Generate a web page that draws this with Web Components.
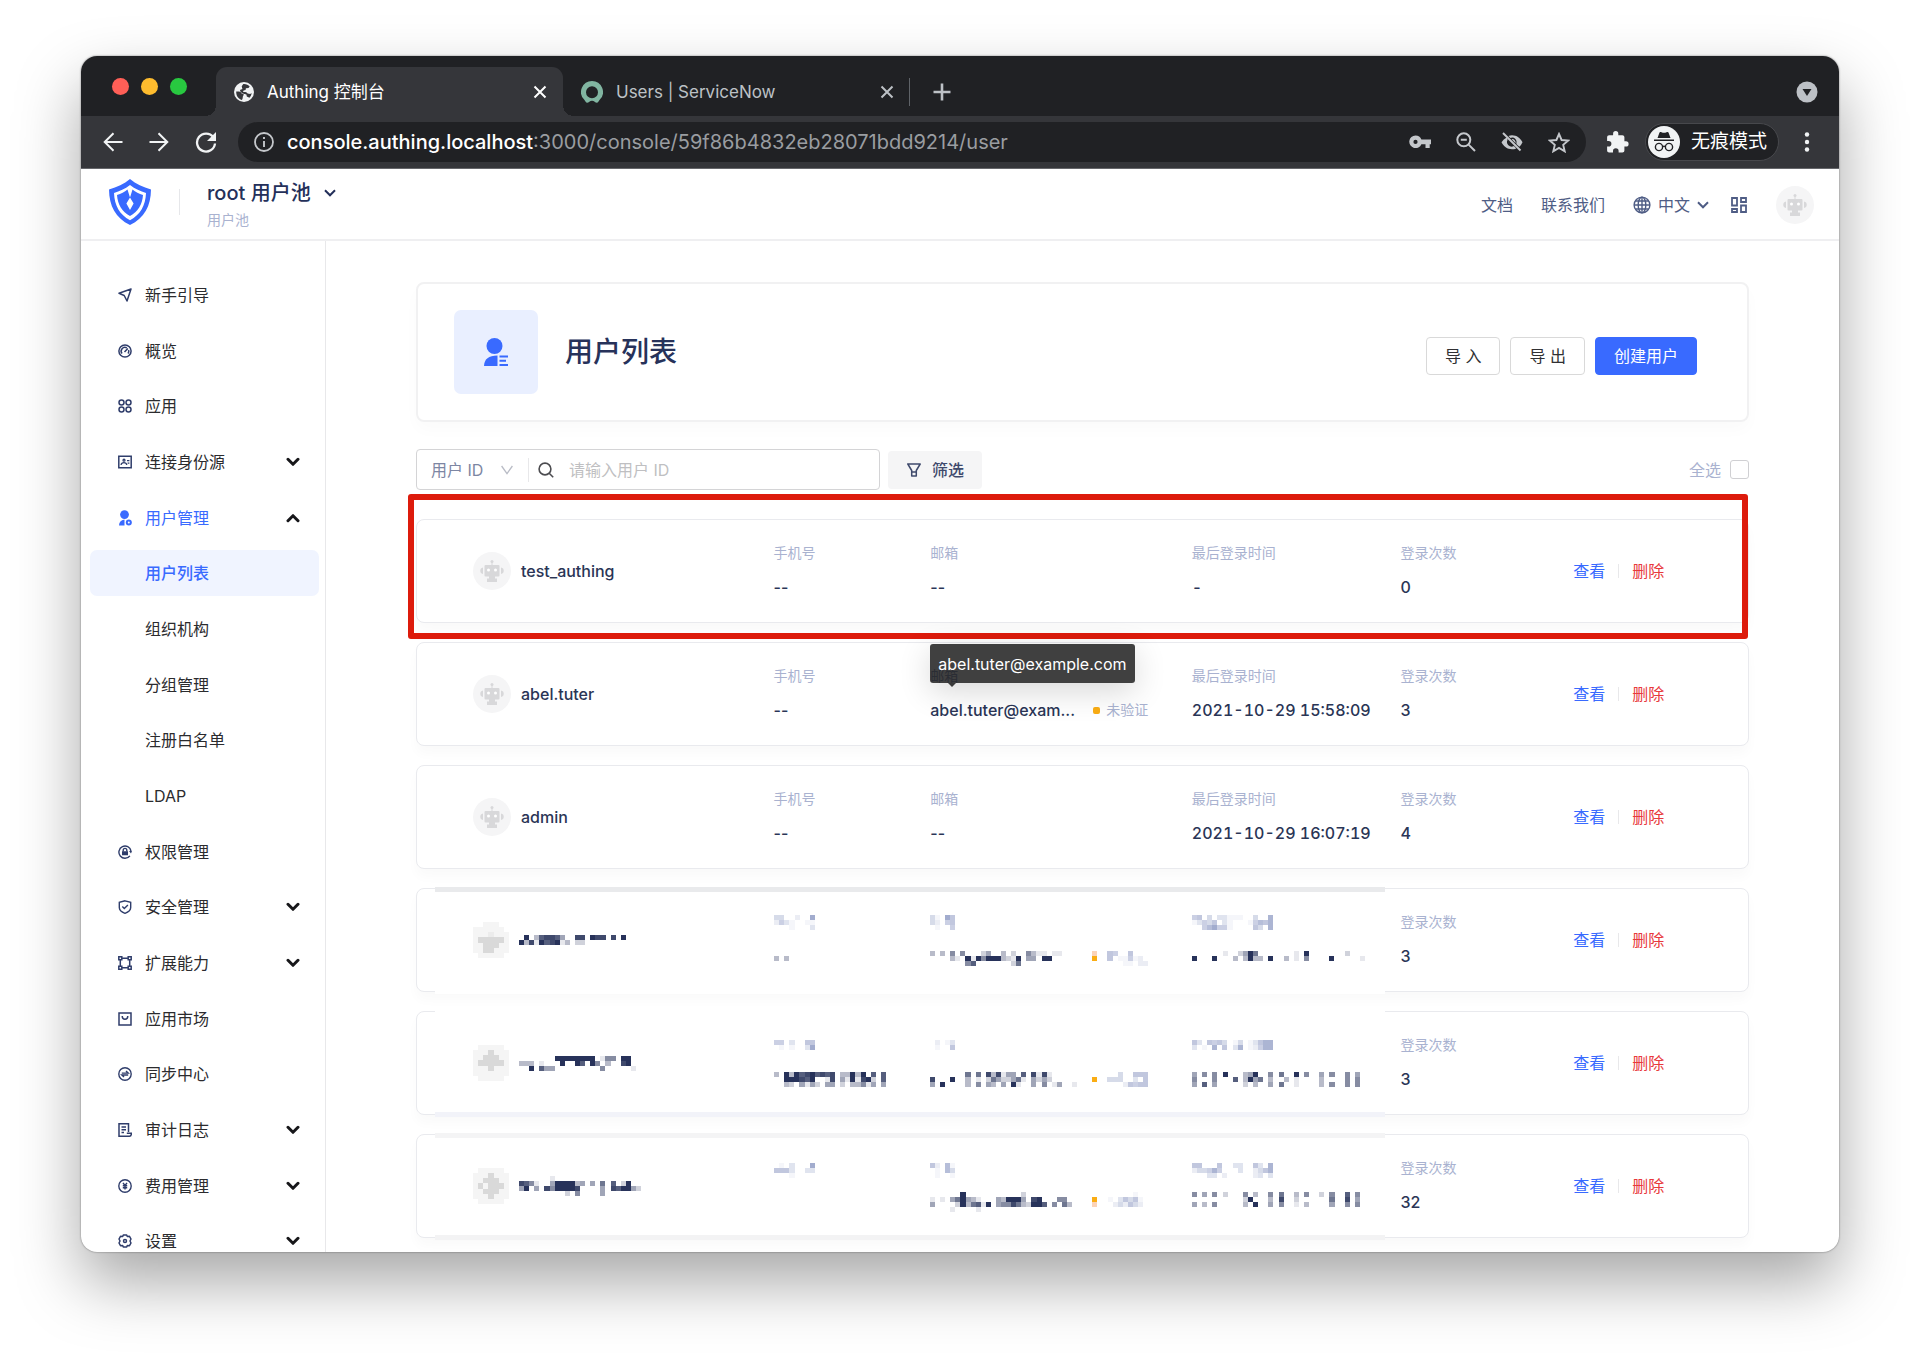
<!DOCTYPE html>
<html lang="zh-CN">
<head>
<meta charset="utf-8">
<title>Authing 控制台</title>
<style>
  html, body { margin: 0; height: 100%; }
  body {
    box-sizing: border-box;
    padding: 56px 81px 107px;
    background: #fff;
    overflow: hidden;
    font-family: Inter, "Noto Sans CJK SC", sans-serif;
    font-size: 16px;
    line-height: 24px;
    color: #2a3556;
    --blue: #396aff;
    --red: #e8393c;
    --soft: #a9b2d0;
  }
</style>
</head>
<body>
<browser-window>
  <tab-strip slot="tabs">
    <browser-tab active icon="globe-solid">Authing 控制台</browser-tab>
    <browser-tab icon="ring">Users | ServiceNow</browser-tab>
  </tab-strip>
  <tool-bar slot="toolbar" host="console.authing.localhost" path=":3000/console/59f86b4832eb28071bdd9214/user"></tool-bar>
  <app-header slot="header"></app-header>
  <side-nav slot="side">
    <nav-item icon="send">新手引导</nav-item>
    <nav-item icon="gauge">概览</nav-item>
    <nav-item icon="apps">应用</nav-item>
    <nav-item icon="idcard" caret="down">连接身份源</nav-item>
    <nav-item icon="usercog" caret="up" open>用户管理</nav-item>
    <nav-item current>用户列表</nav-item>
    <nav-item>组织机构</nav-item>
    <nav-item>分组管理</nav-item>
    <nav-item>注册白名单</nav-item>
    <nav-item>LDAP</nav-item>
    <nav-item icon="lock">权限管理</nav-item>
    <nav-item icon="shield" caret="down">安全管理</nav-item>
    <nav-item icon="nodes" caret="down">扩展能力</nav-item>
    <nav-item icon="bag">应用市场</nav-item>
    <nav-item icon="sync">同步中心</nav-item>
    <nav-item icon="log" caret="down">审计日志</nav-item>
    <nav-item icon="yen" caret="down">费用管理</nav-item>
    <nav-item icon="gear" caret="down">设置</nav-item>
  </side-nav>
  <page-title>用户列表</page-title>
  <list-filter></list-filter>
  <user-list></user-list>
</browser-window>

<script>
const define = (name, css, html) => customElements.define(name, class extends HTMLElement {
  connectedCallback() {
    if (this.shadowRoot) return;
    const root = this.attachShadow({ mode: 'open' });
    root.innerHTML = `<style>:host,*{box-sizing:border-box}button,input,select{font:inherit;color:inherit;margin:0}a{color:inherit;text-decoration:none}${css}</style>` +
      (typeof html === 'function' ? html(this) : html);
  }
});

/* Each icon: [viewBox width, viewBox height, markup] */
const L = 'fill="none" stroke="currentColor"';
const ICONS = {
  'globe-solid': [20, 20, `<circle cx="10" cy="10" r="10" fill="#f1f3f4"/><path fill="#35363a" d="M2.2 9.6c2.4-.2 4.600 .2 5 1.300.3 1 1.900.4 2.400 1.300.5 1-.8 1.500-.8 2.700 0 1.100-.4 2.400-1 3.100C4.500 17.200 2 14 2.200 9.600zM9.300 2c2.700-.3 5 1 6.400 2.500l-1.200 1.600-2.600.1-.3 1.800-2 .6-.6 1.500c1.900-.2 3.800.1 4.600 1.400l2.600.6 1.400-1.200c-.2 1.900-1 3.600-2.200 4.800l-2.600-1.300-.4-2-2.800-.6-2.800-1.600L5.900 8l2.500-1.100L7.700 4.300z"/>`],
  ring: [22, 22, `<path fill="#81b5a1" d="M11 0a11 11 0 0 0-7.700 18.800c1 1.100 1.600 2.900 2.900 3 1.500 0 2.600-2.100 4.800-2.100s3.300 2.100 4.800 2.100c1.300-.1 1.900-1.900 2.900-3A11 11 0 0 0 11 0zm0 17.300a6 6 0 1 1 0-12 6 6 0 0 1 0 12z"/>`],
  close: [14, 14, `<path ${L} stroke-width="2" d="M1.500 1.500l11 11M12.500 1.500l-11 11"/>`],
  plus: [18, 18, `<path ${L} stroke-width="2.600" d="M9 .5v17M.5 9h17"/>`],
  search_tabs: [22, 22, `<circle cx="11" cy="11" r="10.500" fill="#bdc1c6"/><path fill="#202124" d="M6.500 8h9L11 15z"/>`],
  back: [20, 20, `<path ${L} stroke-width="2" d="M19.500 10H2M10.500 1.200L1.700 10l8.800 8.800"/>`],
  forward: [20, 20, `<path ${L} stroke-width="2" d="M.5 10H18M9.500 1.200l8.800 8.800-8.800 8.800"/>`],
  reload: [22, 22, `<path ${L} stroke-width="2.300" d="M18.300 6.200A9 9 0 1 0 20 12.500"/><path fill="currentColor" d="M21 1v9h-9z"/>`],
  info: [20, 20, `<circle cx="10" cy="10" r="9" ${L} stroke-width="1.800"/><path ${L} stroke-width="1.900" d="M10 9v6M10 5v2"/>`],
  key: [22, 14, `<path fill="currentColor" fill-rule="evenodd" d="M6.500.5a6.300 6.300 0 1 0 5.900 8.700h4.100V13h4.200V9.200H22V4.600h-9.600A6.300 6.300 0 0 0 6.500.5zm0 4.300a2.100 2.100 0 1 1 0 4.200 2.100 2.100 0 0 1 0-4.200z"/>`],
  zoomout: [20, 20, `<circle cx="7.800" cy="7.800" r="6.500" ${L} stroke-width="2"/><path ${L} stroke-width="2" d="M12.600 12.600l6.400 6.400M4.800 7.800h6"/>`],
  eyeoff: [22, 20, `<path ${L} stroke-width="2" d="M2 1l17.500 17.500"/><path fill="currentColor" d="M5.700 5.600A13 13 0 0 0 .5 10.300c2 4.200 5.800 7 10.500 7 1.500 0 3-.3 4.300-.9l-2.400-2.400a4.600 4.600 0 0 1-6.300-6.200zM11 3.300c-1.200 0-2.400.2-3.500.6l2 2a4.600 4.600 0 0 1 5.900 6l2.900 2.900a12 12 0 0 0 3.200-4.500c-2-4.200-5.800-7-10.500-7zm-.4 3.900l4 4a3.400 3.400 0 0 0-4-4z"/>`],
  star: [22, 21, `<path ${L} stroke-width="1.900" d="M11 2l2.600 6 6.500.6-4.900 4.300 1.500 6.400L11 15.900l-5.700 3.400 1.500-6.400-4.900-4.300 6.500-.6z"/>`],
  puzzle: [22, 22, `<path fill="currentColor" d="M19 10.300h-1.600V6.200c0-1.100-.9-2-2-2h-4.100V2.700a2.600 2.600 0 0 0-5.200 0v1.500H2.100c-1.100 0-2 .9-2 2V10h1.500a2.800 2.800 0 0 1 0 5.600H.1v3.900c0 1.100.9 2 2 2H6V20a2.800 2.800 0 0 1 5.600 0v1.500h3.800c1.100 0 2-.9 2-2v-4H19a2.600 2.600 0 0 0 0-5.200z"/>`],
  incognito: [32, 32, `<circle cx="16" cy="16" r="16" fill="#f1f3f4"/><path fill="#202124" d="M9.500 12l2-5.500c.4-.8 1.200-.6 2-.3 1.600.7 3.400.7 5 0 .8-.3 1.600-.5 2 .3l2 5.500zM6 13.600h20v1.500H6z"/><g fill="none" stroke="#202124" stroke-width="1.400"><circle cx="11" cy="21" r="3.600"/><circle cx="21" cy="21" r="3.600"/><path d="M14.600 20.600c.9-.6 1.900-.6 2.800 0"/></g>`],
  dots: [6, 20, `<g fill="currentColor"><circle cx="3" cy="2.500" r="2.200"/><circle cx="3" cy="10" r="2.200"/><circle cx="3" cy="17.500" r="2.200"/></g>`],
  logo: [42, 46, `<path fill="#396aff" fill-rule="evenodd" d="M21 0c6 5 13 8 21 10.500-.2 16.500-6.500 28.500-21 35.500C6.500 39 .2 27 0 10.500 8 8 15 5 21 0zm0 6C16 10 10.500 12 5 14c.5 12.500 5.500 21.500 16 27.300C31.500 35.500 36.500 26.500 37 14 31.500 12 26 10 21 6z"/><path fill="#396aff" fill-rule="evenodd" d="M18.500 10.500C15.500 13 12 14.600 8 16c.7 9.500 5 16.500 13 21 8-4.500 12.300-11.500 13-21-4-1.400-7.500-3-10.500-5.500l-2 6.500c-.3 1.300-.7 1.300-1 0zM21 18.500l3.600 6-3.600 6.500-3.600-6.500z"/>`],
  chevron: [12, 8, `<path ${L} stroke-width="2" d="M1 1.300l5 5 5-5"/>`],
  boldchevron: [14, 10, `<path ${L} stroke-width="3" stroke-linecap="round" stroke-linejoin="round" d="M2 2.300l5 5 5-5"/>`],
  thinchevron: [12, 10, `<path ${L} stroke-width="1.300" d="M.6 1l5.400 7.600L11.400 1"/>`],
  globe: [18, 18, `<g ${L} stroke-width="1.400"><circle cx="9" cy="9" r="7.900"/><ellipse cx="9" cy="9" rx="3.800" ry="7.900"/><path d="M9 1v16M1 9h16M2.300 5h13.400M2.300 13h13.400"/></g>`],
  grid: [16, 16, `<g ${L} stroke-width="1.800"><path d="M1 1h5v7.500H1zM10 1h5v4H10zM1 12h5v3H1zM10 8.500h5V15H10z"/></g>`],
  robot: [38, 38, `<circle cx="19" cy="19" r="19" fill="#f5f5f6"/><g fill="#d8d8da"><circle cx="19" cy="9.500" r="1.500"/><path d="M18.500 10h1v3h-1zM12.500 13h13a1 1 0 0 1 1 1v9.500a1 1 0 0 1-1 1H22v2h2V30H14v-3.500h2v-2h-3.500a1 1 0 0 1-1-1V14a1 1 0 0 1 1-1zM10 15.500v6.500a3.300 3.300 0 0 1 0-6.500zM28 15.500v6.500a3.300 3.300 0 0 0 0-6.500z"/></g><circle cx="15.500" cy="18" r="1.500" fill="#fff"/><circle cx="22.500" cy="18" r="1.500" fill="#fff"/>`],
  send: [14, 14, `<path ${L} stroke-width="1.500" stroke-linejoin="round" d="M13 1L1 5.300l5.200 2.200L9 13z"/>`],
  gauge: [14, 14, `<g ${L} stroke-width="1.500"><circle cx="7" cy="7" r="6.100"/><path d="M4 9.500a3.800 3.800 0 0 1 4.800-5.700M10.600 6a3.600 3.600 0 0 1-.6 3.500M6.500 8l3.300-3.600"/></g>`],
  apps: [14, 14, `<g ${L} stroke-width="1.500"><circle cx="3.500" cy="3.500" r="2.500"/><circle cx="10.500" cy="3.500" r="2.500"/><circle cx="3.500" cy="10.500" r="2.500"/><circle cx="10.500" cy="10.500" r="2.500"/></g>`],
  idcard: [14, 14, `<g ${L} stroke-width="1.500"><path d="M.8 1.300h12.400v11.400H.8z"/><g stroke-width="1.200"><circle cx="6" cy="5.200" r="1"/><path d="M3 10c.6-3.200 5.200-3.200 5.800 0M9 5.600h2.400M9.600 8.200h1.800"/></g></g>`],
  usercog: [14, 16, `<g fill="currentColor"><circle cx="6.500" cy="4.600" r="4.400"/><path d="M1 15.500c.1-3.500 1.800-5.500 5.500-6v6z"/><circle cx="10.800" cy="12.500" r="3"/></g><circle cx="10.800" cy="12.500" r="1" fill="#fff"/>`],
  userlist: [24, 28, `<g fill="currentColor"><circle cx="10.500" cy="8" r="8"/><path d="M0 28c.3-7 4.500-10.500 13.500-10.500V28z"/><path d="M15.500 17.500H24v2h-8.500zM15.500 21.700H22v2h-6.500zM15.500 26H24v2h-8.500z"/></g>`],
  lock: [14, 14, `<g ${L} stroke-width="1.400"><path d="M11.900 10.800A6.100 6.100 0 1 1 13 6"/><path d="M5.200 6.500V5.200a1.800 1.800 0 0 1 3.600 0v1.300"/></g><path fill="currentColor" d="M4 6.300h6v4H4zM11 6h3l-1 2.500z"/>`],
  shield: [14, 14, `<g ${L} stroke-width="1.400"><path d="M7 .8l5.700 1.600v5.200c0 2.800-2.500 4.600-5.700 5.700C3.800 12.200 1.300 10.400 1.300 7.600V2.400z"/><path d="M4.300 6.600l2 2 3.600-3.500"/></g>`],
  nodes: [14, 14, `<g ${L} stroke-width="1.500"><path d="M4 2.300h6M4 11.700h6M2.300 4v6M11.700 4v6M.8.800h3v3h-3zM10.200.800h3v3h-3zM.8 10.200h3v3h-3zM10.200 10.200h3v3h-3z"/></g>`],
  bag: [14, 14, `<g ${L} stroke-width="1.500"><path d="M1 1h12v12H1zM4.300 4v.5a2.700 2.700 0 0 0 5.400 0V4"/></g>`],
  sync: [14, 14, `<g ${L} stroke-width="1.400"><circle cx="7" cy="7" r="6.200"/><path d="M3.800 6.100h6.400L8 4M10.200 8H3.800L6 10.100"/></g>`],
  log: [14, 14, `<g ${L} stroke-width="1.500"><path d="M10.500 9V.8H1v12.400h10.500c1.800 0 1.900-2.200 1.900-3H8.800M3.500 4h4.500M3.500 6.800h4.500M3.500 9.600h2.500"/></g>`],
  yen: [14, 14, `<g ${L} stroke-width="1.400"><circle cx="7" cy="7" r="6.200"/><path d="M5 3.800l2 2.700 2-2.700M7 6.500v4M4.800 6.800h4.400M4.800 8.700h4.400"/></g>`],
  gear: [14, 14, `<g ${L} stroke-width="1.500" stroke-linejoin="round"><path d="M5.300 1h3.400l.6 1.600 2.200-.3L13 5l-1 2 1 2-1.500 2.700-2.200-.3-.6 1.600H5.300l-.6-1.600-2.200.3L1 9l1-2-1-2 1.500-2.700 2.200.3z"/><circle cx="7" cy="7" r="1.500"/></g>`],
  search: [16, 16, `<g ${L} stroke-width="1.600"><circle cx="7" cy="7" r="5.900"/><path d="M11.200 11.200l4 4"/></g>`],
  funnel: [14, 14, `<g ${L} stroke-width="1.500" stroke-linejoin="round"><path d="M.8 1h12.400L9.300 7.500V13H4.700V7.500zM4.700 9h4.600"/></g>`]
};

customElements.define('ui-icon', class extends HTMLElement {
  connectedCallback() {
    if (this.shadowRoot) return;
    const [w, h, body] = ICONS[this.getAttribute('name')];
    this.attachShadow({ mode: 'open' }).innerHTML =
      `<style>:host{display:inline-flex;flex:none}svg{display:block}</style><svg width="${w}" height="${h}" viewBox="0 0 ${w} ${h}" aria-hidden="true">${body}</svg>`;
  }
});

/* Pixelated patch for masked values. Rows are separated by "/".
   1-9: dark shades, a-i: label blue shades, O/o: status orange, x-z: avatar greys. */
customElements.define('masked-value', class extends HTMLElement {
  connectedCallback() {
    if (this.shadowRoot) return;
    const rows = this.getAttribute('rows').split('/');
    const cols = Math.max(...rows.map(r => r.length));
    let cells = '';
    rows.forEach((row, y) => [...row].forEach((c, x) => {
      let fill, o = 1;
      if (c >= '1' && c <= '9') { fill = '#27325a'; o = c / 9; }
      else if (c >= 'a' && c <= 'i') { fill = '#a2acce'; o = (c.charCodeAt(0) - 96) / 9; }
      else if (c === 'O') fill = '#faad14';
      else if (c === 'o') fill = '#fbd3b8';
      else if (c === 'x') fill = '#f5f5f5';
      else if (c === 'y') fill = '#ececec';
      else if (c === 'z') fill = '#d9d9d9';
      else return;
      cells += `<rect x="${x}" y="${y}" width="1" height="1" fill="${fill}" opacity="${o.toFixed(2)}"/>`;
    }));
    this.attachShadow({ mode: 'open' }).innerHTML =
      `<style>:host{display:block;flex:none}svg{display:block}</style><svg width="${Math.round(cols * 5.08)}" height="${Math.round(rows.length * 5.08)}" viewBox="0 0 ${cols} ${rows.length}" preserveAspectRatio="none" shape-rendering="crispEdges" aria-hidden="true">${cells}</svg>`;
  }
});

define('browser-window', `
  :host{display:flex;flex-direction:column;height:100%;border-radius:16px;overflow:hidden;background:#fff;
    box-shadow:0 0 2px rgba(0,0,0,.5),0 30px 64px rgba(0,0,0,.35)}
  .body{flex:1;min-height:0;display:flex}
  main{flex:1;min-width:0;padding:41px 90px 0;overflow:hidden}
`, `<slot name="tabs"></slot><slot name="toolbar"></slot><slot name="header"></slot>
  <div class="body"><slot name="side"></slot><main><slot></slot></main></div>`);

define('tab-strip', `
  :host{display:flex;flex:none;height:60px;background:#202124;color:#bdc1c6;padding:0 21px 0 31px}
  .lights{display:flex;gap:12px;padding-top:22px;width:104px}
  .lights i{width:17px;height:17px;border-radius:50%;background:#ff5f57}
  .lights i:nth-child(2){background:#febc2e}.lights i:nth-child(3){background:#28c840}
  .tabs{display:flex;padding-top:11px}
  button{border:0;background:none;padding:0;display:flex;align-items:center;color:inherit}
  .new{margin-top:11px;margin-left:23px}
  .end{margin:11px 0 0 auto}
`, `<div class="lights"><i></i><i></i><i></i></div><div class="tabs"><slot></slot></div>
  <button class="new" aria-label="新标签页"><ui-icon name="plus"></ui-icon></button>
  <button class="end" aria-label="搜索标签页"><ui-icon name="search_tabs"></ui-icon></button>`);

define('browser-tab', `
  :host{display:flex;align-items:center;gap:13px;width:347px;height:49px;padding:0 16px 0 18px;font-size:17px;position:relative;border-radius:11px 11px 0 0}
  :host([active]){background:#35363a;color:#fff}
  :host([active])::before,:host([active])::after{content:"";position:absolute;bottom:0;width:11px;height:11px}
  :host([active])::before{left:-11px;background:radial-gradient(circle at 0 0,transparent 11px,#35363a 11px)}
  :host([active])::after{right:-11px;background:radial-gradient(circle at 100% 0,transparent 11px,#35363a 11px)}
  :host(:not([active]))::after{content:"";position:absolute;right:0;top:11px;height:28px;width:1px;background:#5f6368}
  span{flex:1}
  button{border:0;background:none;padding:0;display:flex;color:inherit}
`, el => `<ui-icon name="${el.getAttribute('icon')}"></ui-icon><span><slot></slot></span><button aria-label="关闭"><ui-icon name="close"></ui-icon></button>`);

define('tool-bar', `
  :host{display:flex;flex:none;align-items:center;height:53px;padding:0 29px 0 22px;background:#35363a;border-bottom:1px solid #66676b;color:#f1f3f4}
  button{border:0;background:none;padding:0;display:flex;align-items:center;color:inherit}
  .nav{display:flex;gap:26px;width:135px}
  .url{flex:1;display:flex;align-items:center;height:40px;border-radius:20px;background:#202124;padding:0 16px;color:#c4c7cb}
  .text{flex:1;margin-left:13px;font-size:20px;line-height:28px;color:#9a9da1}
  .text b{font-weight:500;color:#fff}
  .acts{display:flex;gap:25px}
  .right{display:flex;align-items:center;margin-left:21px}
  .mode{display:flex;align-items:center;gap:11px;height:38px;width:134px;border-radius:19px;background:#202124;border:1px solid #47484c;padding:0 2px;margin:0 25px 0 16px;font-size:19px;color:#fff;white-space:nowrap}
`, el => `<div class="nav"><button aria-label="后退"><ui-icon name="back"></ui-icon></button><button aria-label="前进"><ui-icon name="forward"></ui-icon></button><button aria-label="刷新"><ui-icon name="reload"></ui-icon></button></div>
  <div class="url"><ui-icon name="info"></ui-icon><div class="text"><b>${el.getAttribute('host')}</b>${el.getAttribute('path')}</div>
  <div class="acts"><button aria-label="密码"><ui-icon name="key"></ui-icon></button><button aria-label="缩放"><ui-icon name="zoomout"></ui-icon></button><button aria-label="Cookie"><ui-icon name="eyeoff"></ui-icon></button><button aria-label="收藏"><ui-icon name="star"></ui-icon></button></div></div>
  <div class="right"><button aria-label="扩展程序"><ui-icon name="puzzle"></ui-icon></button><button class="mode"><ui-icon name="incognito"></ui-icon>无痕模式</button><button aria-label="菜单"><ui-icon name="dots"></ui-icon></button></div>`);

define('app-header', `
  :host{display:flex;flex:none;align-items:center;height:72px;border-bottom:2px solid #efeff1;padding:2px 25px 0 28px;color:#4f5d85}
  .sep{width:1px;height:26px;background:#e6e7ea;margin:0 27px 0 28px}
  .brand{display:flex;align-items:center;padding-bottom:6px}
  .pool{flex:1;padding-top:2px}
  .pool button{display:flex;align-items:center;gap:13px;border:0;background:none;padding:0;font-size:20px;line-height:28px;font-weight:500;color:#24305a}
  .pool small{display:block;font-size:14px;line-height:26px;color:var(--soft)}
  nav{display:flex;align-items:center;gap:28px}
  .lang{display:flex;align-items:center;gap:7px;border:0;background:none;padding:0}
  .end{display:flex;align-items:center;gap:29px;margin-left:-6px}
`, `<div class="brand"><ui-icon name="logo"></ui-icon><div class="sep"></div></div>
  <div class="pool"><button>root 用户池 <ui-icon name="chevron"></ui-icon></button><small>用户池</small></div>
  <nav><a href="#">文档</a><a href="#">联系我们</a><button class="lang"><ui-icon name="globe"></ui-icon>中文 <ui-icon name="chevron"></ui-icon></button>
  <div class="end"><ui-icon name="grid"></ui-icon><ui-icon name="robot"></ui-icon></div></nav>`);

define('side-nav', `
  :host{display:flex;flex:none;width:245px;border-right:1px solid #e8e8ea;padding-top:26px}
  nav{flex:1;display:flex;flex-direction:column;margin-bottom:-17px}
`, `<nav><slot></slot></nav>`);

define('nav-item', `
  :host{flex:1 1 0;display:flex;align-items:center;padding:0 6px 0 9px;color:#2b2b2e}
  a{flex:1;display:flex;align-items:center;height:46px;border-radius:7px;padding:0 19px 0 28px}
  .ic{width:27px;display:flex;color:#2f3d6b}
  .t{flex:1}
  :host([open]) .ic,:host([open]) .t{color:var(--blue)}
  :host([current]) a{background:#f0f4ff;color:var(--blue);font-weight:500}
  .c{display:flex;color:#17171a}
  :host([caret=up]) .c{transform:rotate(180deg)}
`, el => `<a href="#"><span class="ic">${el.hasAttribute('icon') ? `<ui-icon name="${el.getAttribute('icon')}"></ui-icon>` : ''}</span><span class="t"><slot></slot></span>${el.hasAttribute('caret') ? '<span class="c"><ui-icon name="boldchevron"></ui-icon></span>' : ''}</a>`);

define('page-title', `
  :host{display:flex;align-items:center;padding:26px 50px 26px 36px;border:2px solid #f1f1f2;border-radius:8px;box-shadow:0 8px 16px rgba(20,30,60,.02)}
  .box{width:84px;height:84px;border-radius:7px;background:#e9efff;color:var(--blue);display:flex;align-items:center;justify-content:center}
  h1{flex:1;margin:0 0 0 27px;font-size:28px;line-height:40px;font-weight:500;color:#27325a}
  .btns{display:flex;gap:10px;padding-top:8px}
  button{height:38px;padding:0 18px;border:1px solid #d9d9d9;border-radius:4px;background:#fff;color:#303033;white-space:nowrap}
  .primary{background:var(--blue);border-color:var(--blue);color:#fff}
`, `<div class="box"><ui-icon name="userlist"></ui-icon></div><h1><slot></slot></h1>
  <div class="btns"><button>导 入</button><button>导 出</button><button class="primary">创建用户</button></div>`);

define('list-filter', `
  :host{display:flex;align-items:center;margin:27px 0 29px}
  .search{display:flex;align-items:center;width:464px;height:41px;border:1px solid #d4d4d6;border-radius:4px;padding:0 14px}
  .sel{display:flex;align-items:center;width:98px;height:24px;border-right:1px solid #e8e8ea;color:#b9bcc6;margin-right:9px}
  select{appearance:none;border:0;background:none;padding:0;width:70px;color:#7d86a3;outline:0}
  input[type=text]{flex:1;min-width:0;border:0;outline:0;padding:0;margin-left:15px;background:none}
  input::placeholder{color:#bfbfc2;opacity:1}
  .find{color:#4c4c50;display:flex}
  .filter{display:flex;align-items:center;gap:11px;height:38px;margin-left:8px;padding:0 18px 0 19px;border:0;border-radius:4px;background:#f5f5f6;color:#3f4a6c;font-weight:500}
  label{display:flex;align-items:center;gap:9px;margin-left:auto;color:var(--soft)}
  input[type=checkbox]{appearance:none;width:19px;height:19px;border:1px solid #d0d0d3;border-radius:3px;background:#fff}
`, `<div class="search"><div class="sel"><select aria-label="搜索字段"><option>用户 ID</option></select><ui-icon name="thinchevron"></ui-icon></div>
  <span class="find"><ui-icon name="search"></ui-icon></span><input type="text" aria-label="用户 ID" placeholder="请输入用户 ID"></div>
  <button class="filter"><ui-icon name="funnel"></ui-icon>筛选</button>
  <label>全选<input type="checkbox"></label>`);

const USERS = [
  { name: 'test_authing', last: '-', count: 0, marked: true },
  { name: 'abel.tuter', email: 'abel.tuter@example.com', last: '2021-10-29 15:58:09', count: 3 },
  { name: 'admin', last: '2021-10-29 16:07:19', count: 4 },
  { count: 3, mask: {
    top: '#e9eaec', bottom: '#fff',
    avatar: '..xxx../xxxxxx./xxxyxxx/xzzzzzx/xxzzzxx/xxzzxxx/.xxxxx.',
    name: '.9.378874..88.988.8.9/9381978913.22',
    phoneL: 'dd..b..i/beca..aa/...a...c', phone: '..../..../3.3./....',
    emailL: 'da.if/db.ef/.a..e',
    email: './3.3.5.5...24..3.2..5311.11......o..fe..f/....31.91959993219.44.99........O..f.aaeab/.......57.......26....................aa.bb',
    lastL: 'ef.d.ccaaa..d..h/acedf.ca...aegfh/..egieea....fd.h',
    last: './......1..2496.......1.9.......2/9...9...3.3933.9..3.1.5....9.....1/.' } },
  { count: 3, mask: {
    top: '#fff', bottom: '#f2f3f9',
    avatar: '.xxxxx./xxxzxxx/xxzzzxx/xzzzzzx/xxxzxxx/xxxxxxx/.xxxxx.',
    name: '.......99999999.155.99./333.1...9..97.95.3..89/..9.744.........5.....1',
    phoneL: 'ee.c..ff/.a.a..ci', phone: '3.9397897878.33939.7.7/..999879..18.4191892.7/..32.4142.44.2.33514.4',
    emailL: '.b.ac/.a..f',
    email: '.......6.6.838144.7.8181.............d..fff/8...9..3.1.26422461.4242........O..ddd..c.f/4.9....3.5.43.4.91..4.5.14..1.........bfeff',
    lastL: 'fc.fefd.ad.acfhh/c.a.h.f.ch.abehh',
    last: '4.5.5.9...349..5.6..9.5..4.5..5.4/5...5...7.3946.3..3.1....3....5.5/4.7.4.....2.3..4.6..1....3.5..5.5' } },
  { count: 32, mask: {
    top: '#f4f4f5', bottom: '#f3f3f4',
    avatar: '.xxxxx./xxxzxxx/xxzzzxx/xzxzzzx/xxzzzxx/xxxzxxx/.xxxxx.',
    name: '......1/8751..4999934.4.6.7.29/49.4.8599998....4.879942/.........2.5....4',
    phoneL: './.a.c...i/fffc..cc/...a', phone: '.',
    emailL: './fb.ga/.a.gd/.a..a',
    email: '......9...........2.....................a/1.1.469431...439994.89...55.....O..a.cfdfa/4....2936719.4558632997.5.63....o...bdbfdb/....1....1',
    lastL: './ff...f..cc..fc.h/bddehe...c..bdfh/...cc.b.....bc.c',
    last: '5.4.5.2...5.3..5.6..3.5..2.5..7.5/..........29...3.8..2......6..8.4/4.3.5.....3.9..4.5..1.3....4..5.5/.' } }
];

define('user-row', `
  :host{display:block;position:relative;border:1px solid #e9eaee;border-radius:8px;box-shadow:0 8px 12px rgba(20,30,60,.025);background:#fff}
  .grid{display:grid;grid-template-columns:301fr 157fr 262fr 209fr 173fr 175fr;height:102px;padding-left:56px;align-items:center}
  .who{display:flex;align-items:center;gap:10px;font-weight:500}
  .cell{display:flex;flex-direction:column;gap:8px;position:relative;min-width:0}
  .l{height:24px;display:flex;align-items:center;font-size:14px;color:var(--soft)}
  .v{height:28px;display:flex;align-items:center;font-size:16px;font-weight:500;white-space:nowrap}
  time{font-variant-numeric:tabular-nums}
  .mail{width:145px}
  .dot{width:7px;height:7px;border-radius:2px;background:#faad14;margin:0 6px 0 18px}
  .state{font-size:14px;font-weight:400;color:var(--soft)}
  .act{display:flex;align-items:center}
  .act a:first-child{color:var(--blue)}.act a:last-child{color:var(--red)}
  .act i{width:1px;height:14px;background:#e8e8ea;margin:0 13px}
  .tip{position:absolute;z-index:3;left:0;top:-20px;background:rgba(0,0,0,.75);color:#fff;border-radius:3px;padding:8px 8px 7px;white-space:nowrap;box-shadow:0 8px 32px rgba(0,0,0,.16)}
  .tip::after{content:"";position:absolute;left:18px;top:100%;border:4px solid transparent;border-top-color:rgba(0,0,0,.75)}
  .strip{position:absolute;left:18px;right:363px;height:5px}
  .top{top:-2px}.bottom{bottom:-3px}
  .mark{position:absolute;z-index:2;inset:-26px 0 -17px -9px;border:6px solid #dd1b0c;border-radius:3px}
`, el => {
  const u = USERS[el.getAttribute('index')], m = u.mask;
  const mv = r => `<masked-value rows="${r}"></masked-value>`;
  const cell = (label, value, lm, vm, extra = '') => `<div class="cell"><div class="l">${m && lm ? mv(lm) : label}</div><div class="v">${m && vm ? mv(vm) : value}</div>${extra}</div>`;
  const mail = u.email ? `<span class="mail">${u.email.slice(0, 15)}...</span><span class="dot"></span><span class="state">未验证</span>` : '--';
  return `<div class="grid">
    <div class="who">${m ? mv(m.avatar) + mv(m.name) : `<ui-icon name="robot"></ui-icon><span>${u.name}</span>`}</div>
    ${cell('手机号', '--', m && m.phoneL, m && m.phone)}
    ${cell('邮箱', mail, m && m.emailL, m && m.email, u.email ? `<div class="tip" role="tooltip">${u.email}</div>` : '')}
    ${cell('最后登录时间', `<time>${u.last}</time>`, m && m.lastL, m && m.last)}
    ${cell('登录次数', u.count)}
    <div class="act"><a href="#">查看</a><i></i><a href="#">删除</a></div></div>
    ${m ? `<div class="strip top" style="background:${m.top}"></div><div class="strip bottom" style="background:${m.bottom}"></div>` : ''}
    ${u.marked ? '<div class="mark"></div>' : ''}`;
});

define('user-list', `:host{display:flex;flex-direction:column;gap:19px}`,
  () => USERS.map((u, i) => `<user-row index="${i}"></user-row>`).join(''));
</script>
</body>
</html>
